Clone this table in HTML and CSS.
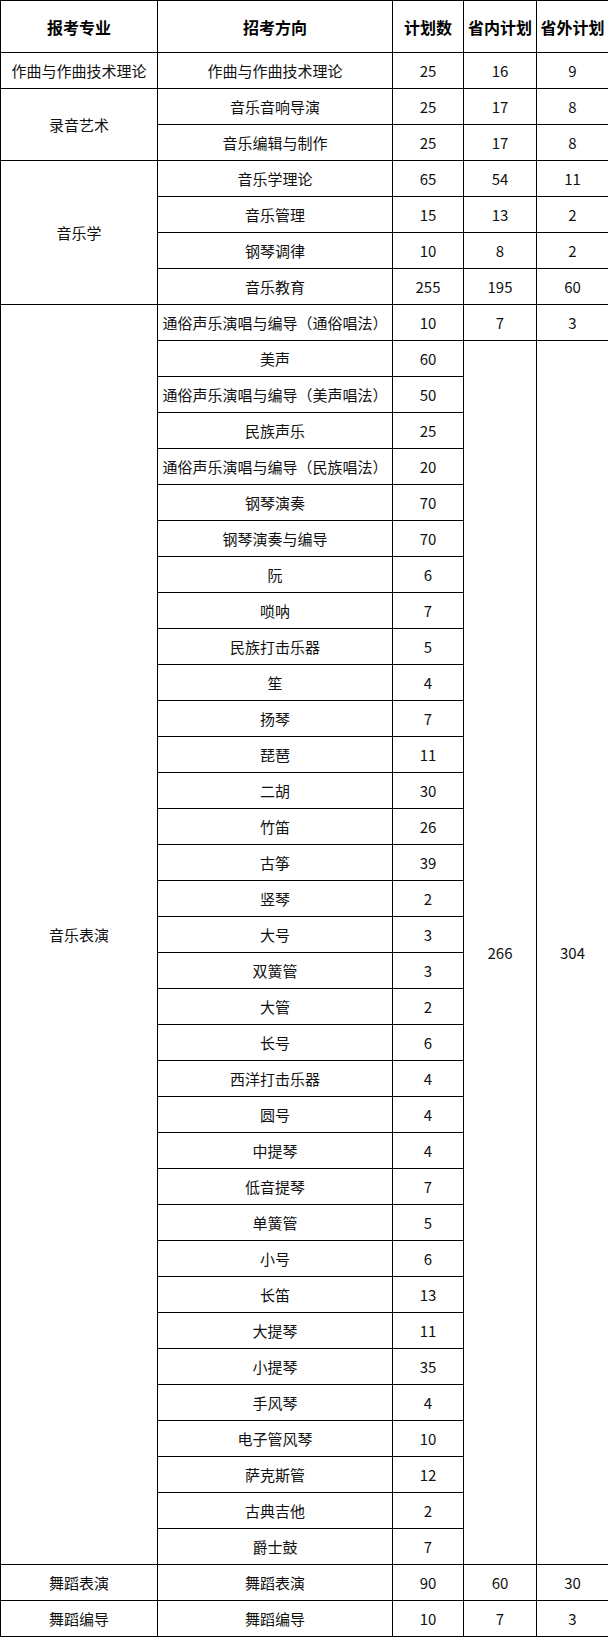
FILE: index.html
```html
<!DOCTYPE html>
<html lang="zh">
<head>
<meta charset="utf-8">
<link rel="stylesheet" href="styles.css">
</head>
<body>
<table class="plan">
<colgroup>
<col class="c1"><col class="c2"><col class="c3"><col class="c4"><col class="c5">
</colgroup>
<thead>
<tr class="head"><th>报考专业</th><th>招考方向</th><th>计划数</th><th>省内计划</th><th>省外计划</th></tr>
</thead>
<tbody>
<tr><td>作曲与作曲技术理论</td><td>作曲与作曲技术理论</td><td>25</td><td>16</td><td>9</td></tr>
<tr><td rowspan="2">录音艺术</td><td>音乐音响导演</td><td>25</td><td>17</td><td>8</td></tr>
<tr><td>音乐编辑与制作</td><td>25</td><td>17</td><td>8</td></tr>
<tr><td rowspan="4">音乐学</td><td>音乐学理论</td><td>65</td><td>54</td><td>11</td></tr>
<tr><td>音乐管理</td><td>15</td><td>13</td><td>2</td></tr>
<tr><td>钢琴调律</td><td>10</td><td>8</td><td>2</td></tr>
<tr><td>音乐教育</td><td>255</td><td>195</td><td>60</td></tr>
<tr><td rowspan="35">音乐表演</td><td>通俗声乐演唱与编导（通俗唱法）</td><td>10</td><td>7</td><td>3</td></tr>
<tr><td>美声</td><td>60</td><td rowspan="34">266</td><td rowspan="34">304</td></tr>
<tr><td>通俗声乐演唱与编导（美声唱法）</td><td>50</td></tr>
<tr><td>民族声乐</td><td>25</td></tr>
<tr><td>通俗声乐演唱与编导（民族唱法）</td><td>20</td></tr>
<tr><td>钢琴演奏</td><td>70</td></tr>
<tr><td>钢琴演奏与编导</td><td>70</td></tr>
<tr><td>阮</td><td>6</td></tr>
<tr><td>唢呐</td><td>7</td></tr>
<tr><td>民族打击乐器</td><td>5</td></tr>
<tr><td>笙</td><td>4</td></tr>
<tr><td>扬琴</td><td>7</td></tr>
<tr><td>琵琶</td><td>11</td></tr>
<tr><td>二胡</td><td>30</td></tr>
<tr><td>竹笛</td><td>26</td></tr>
<tr><td>古筝</td><td>39</td></tr>
<tr><td>竖琴</td><td>2</td></tr>
<tr><td>大号</td><td>3</td></tr>
<tr><td>双簧管</td><td>3</td></tr>
<tr><td>大管</td><td>2</td></tr>
<tr><td>长号</td><td>6</td></tr>
<tr><td>西洋打击乐器</td><td>4</td></tr>
<tr><td>圆号</td><td>4</td></tr>
<tr><td>中提琴</td><td>4</td></tr>
<tr><td>低音提琴</td><td>7</td></tr>
<tr><td>单簧管</td><td>5</td></tr>
<tr><td>小号</td><td>6</td></tr>
<tr><td>长笛</td><td>13</td></tr>
<tr><td>大提琴</td><td>11</td></tr>
<tr><td>小提琴</td><td>35</td></tr>
<tr><td>手风琴</td><td>4</td></tr>
<tr><td>电子管风琴</td><td>10</td></tr>
<tr><td>萨克斯管</td><td>12</td></tr>
<tr><td>古典吉他</td><td>2</td></tr>
<tr><td>爵士鼓</td><td>7</td></tr>
<tr><td>舞蹈表演</td><td>舞蹈表演</td><td>90</td><td>60</td><td>30</td></tr>
<tr><td>舞蹈编导</td><td>舞蹈编导</td><td>10</td><td>7</td><td>3</td></tr>
</tbody>
</table>
</body>
</html>
```
FILE: styles.css
```css
html, body {
  margin: 0;
  padding: 0;
  background: #fff;
}
.plan {
  border-collapse: collapse;
  table-layout: fixed;
  width: 608px;
  font-family: "Noto Sans CJK SC", "Noto Sans", sans-serif;
  color: #111;
}
.c1 { width: 157px; }
.c2 { width: 235px; }
.c3 { width: 71px; }
.c4 { width: 73px; }
.c5 { width: 72px; }
.plan th,
.plan td {
  border: 1px solid #000;
  padding: 0;
  text-align: center;
  vertical-align: middle;
  white-space: nowrap;
  overflow: hidden;
}
.plan td {
  font-size: 15px;
  font-weight: 400;
  height: 35px;
}
.plan th {
  font-size: 16px;
  font-weight: 700;
  color: #000;
  height: 51px;
}
```
